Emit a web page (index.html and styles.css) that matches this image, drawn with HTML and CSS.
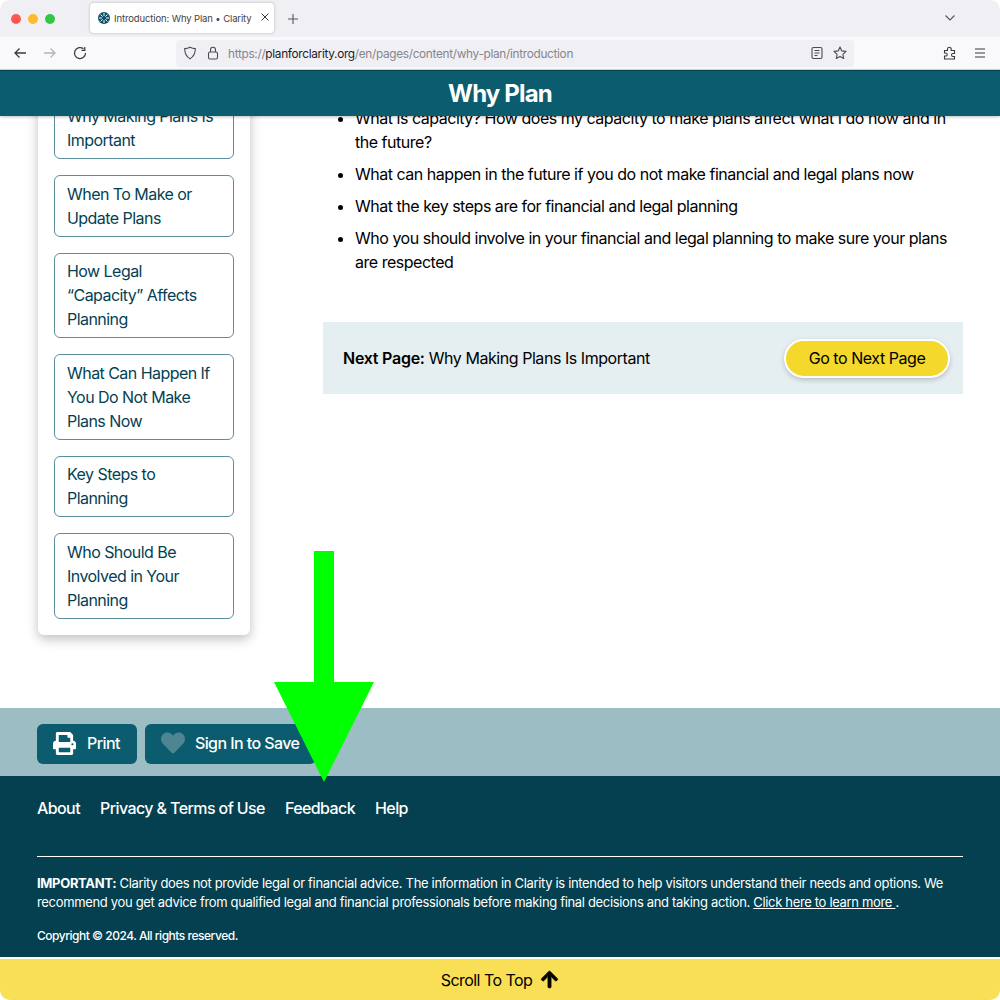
FILE: index.html
```html
<!DOCTYPE html>
<html lang="en">
<head>
<meta charset="utf-8">
<title>Introduction: Why Plan • Clarity</title>
<link rel="stylesheet" href="styles.css">
</head>
<body>
<div class="window">
  <div class="tabbar">
    <div class="lights"><span class="light red"></span><span class="light amber"></span><span class="light green"></span></div>
    <div class="tab">
      <svg class="favicon" viewBox="0 0 12 12"><circle cx="6" cy="6" r="6" fill="#0b5068"/><path d="M6 1v3M6 8v3M1 6h3M8 6h3M2.500 2.500l2.100 2.100M7.400 7.400l2.100 2.100M9.500 2.500L7.400 4.600M4.600 7.400L2.500 9.500" stroke="#fff" stroke-width="1"/></svg>
      <span class="tab-title">Introduction: Why Plan • Clarity</span>
      <svg class="tab-close" viewBox="0 0 10 10"><path d="M1.500 1.500l7 7M8.500 1.500l-7 7" stroke="#3a3a40" stroke-width="1" fill="none"/></svg>
    </div>
    <svg class="newtab" viewBox="0 0 12 12"><path d="M6 1v10M1 6h10" stroke="#55555c" stroke-width="1.100"/></svg>
    <svg class="tabs-menu" viewBox="0 0 12 8"><path d="M1.500 1.500L6 6l4.500-4.500" stroke="#55555c" stroke-width="1.100" fill="none"/></svg>
  </div>
  <div class="toolbar">
    <svg class="tool-icon" viewBox="0 0 14 14"><path d="M13 7H2M6.500 2.500L2 7l4.500 4.500" stroke="#3a3a40" stroke-width="1.300" fill="none"/></svg>
    <svg class="tool-icon" viewBox="0 0 14 14"><path d="M1 7h11M7.500 2.500L12 7l-4.500 4.500" stroke="#b4b4ba" stroke-width="1.300" fill="none"/></svg>
    <svg class="tool-icon" viewBox="0 0 14 14"><path d="M12.500 7A5.500 5.500 0 1 1 10.500 2.800M11.800 1v3.300H8.500" stroke="#3a3a40" stroke-width="1.200" fill="none"/></svg>
    <div class="urlbar">
      <svg class="url-icon" viewBox="0 0 14 14"><path d="M7 1.200c1.700.9 3.400 1.300 5.300 1.400 0 4.700-1.700 8.300-5.300 10.200C3.400 10.900 1.700 7.300 1.700 2.600 3.600 2.500 5.300 2.100 7 1.200z" stroke="#4a4a50" stroke-width="1.100" fill="none"/></svg>
      <svg class="url-icon" viewBox="0 0 14 14"><rect x="2.500" y="6" width="9" height="7" rx="1.500" stroke="#4a4a50" stroke-width="1.100" fill="none"/><path d="M4.500 6V3.800a2.500 2.500 0 0 1 5 0V6" stroke="#4a4a50" stroke-width="1.100" fill="none"/></svg>
      <span class="url"><span class="url-dim">https://</span>planforclarity.org<span class="url-dim">/en/pages/content/why-plan/introduction</span></span>
      <svg class="url-icon" viewBox="0 0 14 14"><rect x="2" y="1.500" width="10" height="11" rx="1.500" stroke="#4a4a50" stroke-width="1.100" fill="none"/><path d="M4.500 4.500h5M4.500 7h5M4.500 9.500h3" stroke="#4a4a50" stroke-width="1"/></svg>
      <svg class="url-icon" viewBox="0 0 14 14"><path d="M7 1l1.800 3.900 4.200.5-3.100 2.900.8 4.200L7 10.400l-3.700 2.100.8-4.200L1 5.400l4.200-.5z" stroke="#4a4a50" stroke-width="1.100" fill="none" stroke-linejoin="round"/></svg>
    </div>
    <div class="tool-right">
      <svg class="tool-icon" viewBox="0 0 14 14"><path d="M1.500 4.500h3V3a1.800 1.800 0 0 1 1.800-1.700A1.800 1.800 0 0 1 8.200 3v1.500h3.300v3H10a1.500 1.500 0 0 0 0 3h1.500v2.500h-10v-3h1.200a1.500 1.500 0 0 0 0-3H1.500z" stroke="#3a3a40" stroke-width="1.100" fill="none"/></svg>
      <svg class="tool-icon" viewBox="0 0 14 14"><path d="M2 3h10M2 7h10M2 11h10" stroke="#3a3a40" stroke-width="1.100"/></svg>
    </div>
  </div>

  <header class="site-header"><h1 class="site-title">Why Plan</h1></header>

  <main class="viewport">
    <div class="columns">
      <nav class="side-card">
        <a class="side-link">Why Making Plans Is Important</a>
        <a class="side-link">When To Make or Update Plans</a>
        <a class="side-link">How Legal “Capacity” Affects Planning</a>
        <a class="side-link">What Can Happen If You Do Not Make Plans Now</a>
        <a class="side-link">Key Steps to Planning</a>
        <a class="side-link">Who Should Be Involved in Your Planning</a>
      </nav>
      <section class="content">
        <ul class="topics">
          <li>What is capacity? How does my capacity to make plans affect what I do now and in the future?</li>
          <li>What can happen in the future if you do not make financial and legal plans now</li>
          <li>What the key steps are for financial and legal planning</li>
          <li>Who you should involve in your financial and legal planning to make sure your plans are respected</li>
        </ul>
        <div class="next-page">
          <p class="next-text"><strong>Next Page:</strong> Why Making Plans Is Important</p>
          <a class="next-btn">Go to Next Page</a>
        </div>
      </section>
    </div>
  </main>

  <div class="actions">
    <a class="action-btn">
      <svg class="print-icon" viewBox="0 0 512 512"><path fill="#fff" d="M448 192V77.250c0-8.490-3.370-16.620-9.370-22.630L393.370 9.370c-6-6-14.140-9.370-22.630-9.370H96C78.330 0 64 14.330 64 32v160c-35.350 0-64 28.650-64 64v112c0 8.840 7.160 16 16 16h48v96c0 17.670 14.330 32 32 32h320c17.670 0 32-14.330 32-32v-96h48c8.840 0 16-7.160 16-16V256c0-35.350-28.650-64-64-64zm-64 256H128v-96h256v96zm0-224H128V64h192v48c0 8.840 7.160 16 16 16h48v96zm48 72c-13.250 0-24-10.750-24-24 0-13.260 10.750-24 24-24s24 10.740 24 24c0 13.250-10.750 24-24 24z"/></svg>
      Print
    </a>
    <a class="action-btn">
      <svg class="heart-icon" viewBox="0 0 512 512"><path fill="#4d8593" d="M462.300 62.600C407.500 15.900 326 24.300 275.700 76.200L256 96.500l-19.700-20.300C186.100 24.300 104.500 15.900 49.700 62.600c-62.800 53.600-66.100 149.800-9.900 207.900l193.500 199.800c12.500 12.900 32.800 12.900 45.300 0l193.500-199.800c56.300-58.100 53-154.300-9.800-207.900z"/></svg>
      Sign In to Save
    </a>
  </div>

  <footer class="footer">
    <div class="footer-links">
      <a>About</a><a>Privacy &amp; Terms of Use</a><a>Feedback</a><a>Help</a>
    </div>
    <hr class="footer-rule">
    <p class="disclaimer"><strong>IMPORTANT:</strong> Clarity does not provide legal or financial advice. The information in Clarity is intended to help visitors understand their needs and options. We recommend you get advice from qualified legal and financial professionals before making final decisions and taking action. <a class="learn-more">Click here to learn more </a>.</p>
    <p class="copyright">Copyright © 2024. All rights reserved.</p>
  </footer>

  <div class="scroll-top">
    Scroll To Top
    <svg class="up-icon" viewBox="0 0 448 512"><path fill="#000" stroke="#000" stroke-width="24" d="M34.900 289.500l-22.200-22.200c-9.400-9.400-9.400-24.600 0-33.900L207 39c9.400-9.400 24.600-9.400 33.900 0l194.300 194.300c9.400 9.400 9.400 24.600 0 33.900L413 289.400c-9.500 9.500-25 9.300-34.300-.4L264 168.600V456c0 13.300-10.700 24-24 24h-32c-13.300 0-24-10.700-24-24V168.600L69.200 289.100c-9.300 9.800-24.800 10-34.300.4z"/></svg>
  </div>

  <svg class="green-arrow" viewBox="0 0 100 231"><path fill="#00ff00" d="M40 0h20v131h40L50 231 0 131h40z"/></svg>
</div>
</body>
</html>
```

FILE: styles.css
```css
* { box-sizing: border-box; }
html, body { margin: 0; padding: 0; background: #fff; }
body { font-family: Inter, "Noto Sans", sans-serif; color: #000; letter-spacing: -0.028em; }
a { color: inherit; text-decoration: none; }
p, h1, ul { margin: 0; }

.window {
  position: relative;
  width: 1000px;
  height: 1000px;
  display: flex;
  flex-direction: column;
  overflow: hidden;
  border-radius: 10px;
}

/* browser chrome */
.tabbar {
  flex: none;
  height: 37px;
  display: flex;
  align-items: center;
  background: #f0eff4;
  padding-left: 11px;
}
.lights { display: flex; gap: 7px; width: 79px; }
.light { width: 10px; height: 10px; border-radius: 50%; }
.red { background: #fc5753; }
.amber { background: #fdbc2e; }
.green { background: #33c748; }
.tab {
  width: 184px;
  height: 30px;
  margin-top: -1px;
  display: flex;
  align-items: center;
  gap: 4px;
  padding-left: 8px;
  background: #fff;
  border-radius: 4px;
  box-shadow: 0 0 3px rgba(0, 0, 0, .25);
}
.favicon { width: 12px; height: 12px; flex: none; }
.tab-title { font-size: 9.500px; letter-spacing: -0.013em; color: #3f3f46; white-space: nowrap; width: 141px; }
.tab-close { width: 10px; height: 10px; flex: none; margin-left: 1px; margin-top: -2px; }
.newtab { width: 12px; height: 12px; margin-left: 13px; }
.tabs-menu { width: 12px; height: 8px; margin-left: auto; margin-right: 44px; margin-top: -1px; }

.toolbar {
  flex: none;
  height: 33px;
  display: flex;
  align-items: center;
  gap: 16px;
  padding: 0 13px;
  background: #f9f9fb;
  border-bottom: 1px solid #d9d9de;
}
.tool-icon { width: 14px; height: 14px; flex: none; }
.urlbar {
  width: 678px;
  height: 27px;
  margin-left: 73px;
  margin-right: 73px;
  flex: none;
  display: flex;
  align-items: center;
  gap: 9px;
  padding: 0 7px;
  background: #f0f0f4;
  border-radius: 4px;
}
.url-icon { width: 14px; height: 14px; flex: none; }
.url {
  flex: 1;
  margin: 1px 0 0 -1px;
  font-size: 11.800px;
  letter-spacing: -0.0256em;
  color: #1c1b22;
  white-space: nowrap;
}
.url-dim { color: #85858c; }
.tool-right { display: flex; gap: 16px; }

/* site */
.site-header {
  flex: none;
  height: 46px;
  display: flex;
  align-items: center;
  justify-content: center;
  background: #0b5c6e;
  border-top: 1px solid #07414f;
  box-shadow: 0 1px 3px rgba(0, 0, 0, .25);
  position: relative;
  z-index: 1;
}
.site-title { font-size: 24px; font-weight: 700; letter-spacing: -0.035em; color: #fff; line-height: 44px; }

.viewport { flex: none; height: 592px; overflow: hidden; }
.columns {
  display: flex;
  align-items: flex-start;
  gap: 73px;
  margin-top: -34.500px;
  padding: 0 37px 0 38px;
}
.side-card {
  flex: none;
  width: 212px;
  display: flex;
  flex-direction: column;
  gap: 16px;
  padding: 16px;
  background: #fff;
  border-radius: 6px;
  box-shadow: 0 4px 12px rgba(0, 0, 0, .25);
}
.side-link {
  padding: 5.750px 16px 5.750px 12px;
  border: 1px solid #5c8f9b;
  border-radius: 6px;
  font-size: 16px;
  line-height: 24px;
  letter-spacing: -0.034em;
  color: #043f54;
}

.content { flex: 1; padding-top: 24.500px; }
.topics {
  padding-left: 32px;
  font-size: 16px;
  line-height: 24px;
  letter-spacing: -0.03em;
}
.topics li { margin-bottom: 8px; }
.next-page {
  display: flex;
  align-items: center;
  justify-content: space-between;
  height: 72px;
  margin-top: 48px;
  padding: 0 13px 0 20px;
  background: #e5eef1;
}
.next-text { font-size: 16px; line-height: 24px; }
.next-text strong { font-weight: 600; letter-spacing: -0.016em; }
.next-btn {
  width: 166px;
  height: 39px;
  display: flex;
  align-items: center;
  justify-content: center;
  font-size: 16px;
  background: #f4d82b;
  border: 2px solid #fff;
  border-radius: 20px;
  box-shadow: 0 2px 5px rgba(0, 0, 0, .2);
}

.actions {
  flex: none;
  height: 68px;
  display: flex;
  align-items: center;
  gap: 8px;
  padding: 4px 37px 0;
  background: #9bbdc3;
}
.action-btn {
  display: flex;
  align-items: center;
  height: 40px;
  padding: 0 17px 2px 16px;
  gap: 11px;
  background: #0b5c6e;
  border-radius: 6px;
  font-size: 16px;
  font-weight: 500;
  letter-spacing: -0.036em;
  color: #fff;
}
.print-icon { width: 23px; height: 23px; }
.heart-icon { width: 24px; height: 24px; margin-right: -1px; }

.footer {
  flex: none;
  height: 181px;
  padding: 20px 37px 0;
  background: #04404f;
  color: #fff;
}
.footer-links {
  display: flex;
  gap: 20px;
  font-size: 16px;
  font-weight: 500;
  line-height: 24px;
  letter-spacing: -0.037em;
}
.footer-rule {
  height: 1px;
  margin: 36px 0 17px;
  border: 0;
  background: #fff;
}
.disclaimer { font-size: 13px; line-height: 19px; letter-spacing: -0.0255em; }
.disclaimer strong { font-weight: 700; }
.learn-more { text-decoration: underline; }
.copyright { margin-top: 14px; font-size: 12px; font-weight: 500; line-height: 19px; letter-spacing: -0.04em; }

.scroll-top {
  flex: none;
  height: 43px;
  display: flex;
  align-items: center;
  justify-content: center;
  gap: 8px;
  background: #f8df55;
  border-top: 2px solid #fff;
  font-size: 16px;
  letter-spacing: -0.034em;
}
.up-icon { width: 19px; height: 19px; }

.green-arrow {
  position: absolute;
  left: 274px;
  top: 551px;
  width: 100px;
  height: 231px;
}
```
